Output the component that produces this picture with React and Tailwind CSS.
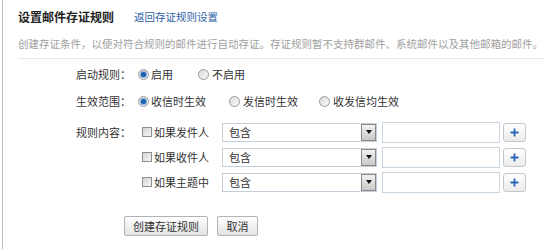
import React from "react";

function Radio({ checked }) {
  return (
    <span className="inline-flex w-[11px] h-[11px] rounded-full border border-[#9a9a9a] bg-gradient-to-br from-[#d9d9d9] to-[#fafafa] items-center justify-center shrink-0">
      {checked && (
        <span className="block w-[5px] h-[5px] rounded-full bg-[#1f5fae] shadow-[0_0_0_1px_#7fa8d8]"></span>
      )}
    </span>
  );
}

function Checkbox() {
  return (
    <span className="block w-[10px] h-[10px] border border-[#8e8e8e] bg-gradient-to-br from-[#d4d4d4] to-[#f6f6f6] shrink-0"></span>
  );
}

function RuleRow({ label }) {
  return (
    <div className="flex items-center h-[20px]">
      <div className="flex items-center w-[80px] ml-[11px]">
        <Checkbox />
        <span className="ml-[2px]">{label}</span>
      </div>
      <div className="relative w-[155px] h-[19px] border border-[#c3ced8] bg-white flex items-center">
        <span className="pl-[6px]">包含</span>
        <span className="absolute right-0 top-0 w-[15px] h-[17px] border border-[#8a8a8a] bg-gradient-to-b from-[#f2f2f2] to-[#c9c9c9] flex items-center justify-center">
          <span className="block w-0 h-0 border-l-[3px] border-r-[3px] border-t-[4px] border-l-transparent border-r-transparent border-t-[#111]"></span>
        </span>
      </div>
      <div className="ml-[5px] w-[118px] h-[21px] border border-[#c9d5e0] bg-white"></div>
      <button className="ml-[3px] w-[23px] h-[19px] rounded-[3px] border border-[#c6c6c6] bg-gradient-to-b from-white to-[#ebebeb] flex items-center justify-center">
        <svg width="9" height="9" viewBox="0 0 9 9">
          <path d="M4.5 0.5v8M0.5 4.5h8" stroke="#2a66b8" strokeWidth="1.8" />
        </svg>
      </button>
    </div>
  );
}

export default function App() {
  return (
    <div
      className="w-[553px] h-[249px] bg-white text-[11px] text-[#333] overflow-hidden"
      style={{ fontFamily: '"Noto Sans CJK SC", "Noto Sans", sans-serif' }}
    >
      <div className="ml-[2px] h-[249px] border-l border-[#bdbdbd] pl-[15px]">
        <div className="pt-[9px] flex items-center h-[25px] leading-[16px]">
          <span className="text-[12px] font-bold text-[#222]">设置邮件存证规则</span>
          <a className="ml-[20px] text-[#2b5fa6] text-[10.5px]">返回存证规则设置</a>
        </div>
        <div className="mt-[11px] h-[16px] leading-[16px] text-[10.5px] text-[#a0a0a0] whitespace-nowrap">
          创建存证条件，以便对符合规则的邮件进行自动存证。存证规则暂不支持群邮件、系统邮件以及其他邮箱的邮件。
        </div>
        <div className="mt-[6px] w-[527px] border-t border-[#e2e9f0]"></div>

        <div className="mt-[5px] flex items-center h-[20px]">
          <div className="w-[113px] text-right">启动规则：</div>
          <div className="ml-[7px] flex items-center">
            <Radio checked />
            <span className="ml-[2px]">启用</span>
          </div>
          <div className="ml-[25px] flex items-center">
            <Radio />
            <span className="ml-[3px]">不启用</span>
          </div>
        </div>

        <div className="mt-[7px] flex items-center h-[20px]">
          <div className="w-[113px] text-right">生效范围：</div>
          <div className="ml-[7px] flex items-center">
            <Radio checked />
            <span className="ml-[2px]">收信时生效</span>
          </div>
          <div className="ml-[23px] flex items-center">
            <Radio />
            <span className="ml-[3px]">发信时生效</span>
          </div>
          <div className="ml-[21px] flex items-center">
            <Radio />
            <span className="ml-[3px]">收发信均生效</span>
          </div>
        </div>

        <div className="mt-[11px] flex items-start">
          <div className="w-[113px] text-right h-[20px] leading-[20px]">规则内容：</div>
          <div className="flex flex-col gap-[5px]">
            <RuleRow label="如果发件人" />
            <RuleRow label="如果收件人" />
            <RuleRow label="如果主题中" />
          </div>
        </div>

        <div className="mt-[24px] flex items-center pl-[106px]">
          <button className="w-[84px] h-[20px] rounded-[2px] border border-[#b3b3b3] bg-gradient-to-b from-white to-[#e3e3e3] text-[11px] leading-none text-[#333]">
            创建存证规则
          </button>
          <button className="ml-[9px] w-[41px] h-[20px] rounded-[2px] border border-[#b3b3b3] bg-gradient-to-b from-white to-[#e3e3e3] text-[11px] leading-none text-[#333]">
            取消
          </button>
        </div>
      </div>
    </div>
  );
}
